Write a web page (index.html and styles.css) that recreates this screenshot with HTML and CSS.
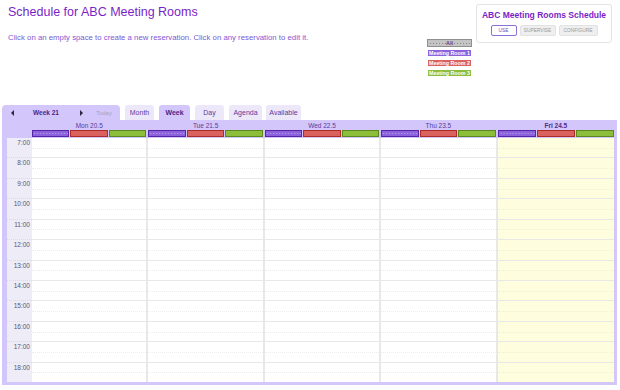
FILE: index.html
```html
<!DOCTYPE html>
<html lang="en">
  <head>
    <meta charset="utf-8">
    <title>Schedule for ABC Meeting Rooms</title>
    <link rel="stylesheet" href="styles.css">
  </head>
  <body>
    <!-- Cabecera -->
    <header class="top">
      <div class="intro">
        <h1>Schedule for ABC Meeting Rooms</h1>
        <p>Click on an empty space to create a new reservation. Click on any reservation to edit it.</p>
      </div>
      <ul class="legend">
        <li class="all">All</li>
        <li class="room1">Meeting Room 1</li>
        <li class="room2">Meeting Room 2</li>
        <li class="room3">Meeting Room 3</li>
      </ul>
      <div class="app-box">
        <h2>ABC Meeting Rooms Schedule</h2>
        <div class="modes">
          <button class="mode on">USE</button>
          <button class="mode wide">SUPERVISE</button>
          <button class="mode wider">CONFIGURE</button>
        </div>
      </div>
    </header>

    <!-- Calendario -->
    <section class="calendar">
      <nav class="tabs">
        <div class="week-nav">
          <span class="arrow left"></span>
          <b>Week 21</b>
          <span class="arrow right"></span>
          <span class="today">Today</span>
        </div>
        <a class="tab t-month">Month</a>
        <a class="tab t-week active">Week</a>
        <a class="tab t-day">Day</a>
        <a class="tab t-agenda">Agenda</a>
        <a class="tab t-avail">Available</a>
      </nav>

      <div class="frame">
        <div class="corner"></div>
        <div class="day-head">Mon 20.5<div class="bars"><i class="b1"></i><i class="b2"></i><i class="b3"></i></div></div>
        <div class="day-head">Tue 21.5<div class="bars"><i class="b1"></i><i class="b2"></i><i class="b3"></i></div></div>
        <div class="day-head">Wed 22.5<div class="bars"><i class="b1"></i><i class="b2"></i><i class="b3"></i></div></div>
        <div class="day-head">Thu 23.5<div class="bars"><i class="b1"></i><i class="b2"></i><i class="b3"></i></div></div>
        <div class="day-head current">Fri 24.5<div class="bars"><i class="b1"></i><i class="b2"></i><i class="b3"></i></div></div>

        <div class="times" id="times"></div>
        <div class="day"></div>
        <div class="day"></div>
        <div class="day"></div>
        <div class="day"></div>
        <div class="day current"></div>
      </div>
    </section>

    <script>
      // Horas de 7:00 a 18:00
      const times = document.getElementById('times');
      for (let h = 7; h <= 18; h++) {
        times.insertAdjacentHTML('beforeend', '<div class="time">' + h + ':00</div>');
      }
      document.querySelectorAll('.day').forEach(function(col) {
        for (let h = 7; h <= 18; h++) {
          col.insertAdjacentHTML('beforeend', '<div class="slot"></div>');
        }
      });
    </script>
  </body>
</html>
```

FILE: styles.css
```css
/* Reseteo */
* {
  margin: 0;
  padding: 0;
  box-sizing: border-box;
}

body {
  font-family: "Liberation Sans", Arial, sans-serif;
  background: #fff;
  width: 620px;
  height: 390px;
  overflow: hidden;
}

/* Cabecera */
.top {
  display: flex;
  height: 105px;
  padding: 0 8px;
}

.intro {
  flex: 1;
}

.intro h1 {
  margin-top: 5px;
  font-size: 12.5px;
  line-height: 14px;
  font-weight: normal;
  color: #7a1fc6;
}

.intro p {
  margin-top: 14px;
  font-size: 7.8px;
  line-height: 10px;
  color: #7d5ad3;
}

.legend {
  list-style: none;
  margin-top: 39px;
  width: 45px;
}

.legend li {
  height: 8px;
  margin-bottom: 2px;
  border: 1px solid;
  font-size: 5.3px;
  line-height: 6px;
  font-weight: bold;
  text-align: center;
  color: #fff;
  white-space: nowrap;
}

.legend .all {
  background: #c4c4c4 linear-gradient(90deg, #8a8a8a 1px, transparent 1px) repeat-x center / 3px 1px;
  border-color: #909090;
  color: #5a4a8a;
}

.room1, .bars .b1 {
  background-color: #8b62dc;
  border-color: #5526a8;
}

.room2, .bars .b2 {
  background-color: #d9625e;
  border-color: #ad2c2a;
}

.room3, .bars .b3 {
  background-color: #8cbe3c;
  border-color: #5a8a1c;
}

.app-box {
  width: 136px;
  height: 39px;
  margin: 4px 0 0 4px;
  padding-top: 5px;
  border: 1px solid #e4e4e4;
  border-radius: 3px;
  text-align: center;
}

.app-box h2 {
  font-size: 8.5px;
  line-height: 10px;
  color: #7a1fc6;
}

.modes {
  display: flex;
  justify-content: center;
  gap: 3px;
  margin-top: 5px;
}

.mode {
  width: 36px;
  height: 11px;
  font-family: inherit;
  font-size: 4.8px;
  color: #9a9a9a;
  background: #efefef;
  border: 1px solid #e2e2e2;
  border-radius: 2px;
}

.mode.on {
  width: 26px;
  color: #6a4fb8;
  background: #fff;
  border-color: #8b6fd6;
}

.mode.wider {
  width: 39px;
}

/* Calendario */
.calendar {
  margin: 0 3px 0 2px;
}

.tabs {
  display: flex;
  height: 15px;
}

.week-nav {
  display: flex;
  align-items: center;
  width: 118px;
  background: #d3c6fb;
  border-radius: 4px 4px 0 0;
}

.week-nav b {
  margin-left: 19px;
  font-size: 6.5px;
  color: #4b1f8a;
}

.arrow {
  width: 0;
  height: 0;
  border-top: 3px solid transparent;
  border-bottom: 3px solid transparent;
}

.arrow.left {
  margin-left: 9px;
  border-right: 3px solid #2c2540;
}

.arrow.right {
  margin-left: 21px;
  border-left: 3px solid #2c2540;
}

.today {
  margin-left: 13px;
  font-size: 6px;
  color: #a9a2bd;
}

.tab {
  margin-left: 5px;
  width: 29px;
  background: #ece8f9;
  border-radius: 3px 3px 0 0;
  font-size: 7px;
  line-height: 15px;
  text-align: center;
  color: #5b3aa0;
}

.tab.active {
  width: 31px;
  background: #d3c6fb;
  font-weight: bold;
  color: #4b1f8a;
}

.t-agenda {
  width: 33px;
}

.t-avail {
  width: 35px;
  margin-left: 4px;
}

.frame {
  display: grid;
  grid-template-columns: 25px repeat(5, 1fr);
  grid-template-rows: 18px 244px;
  padding: 0 3px 3px 5px;
  background: #d3c6fb;
}

.day-head {
  padding: 2px 2px 0 0;
  font-size: 6.5px;
  line-height: 8px;
  text-align: center;
  color: #5a3c98;
}

.day-head.current {
  padding-right: 0;
  font-weight: bold;
  color: #4b2d8a;
}

.bars {
  display: flex;
  gap: 1px;
  height: 7px;
}

.bars i {
  flex: 1;
  border: 1px solid;
}

.bars .b1 {
  background-image: linear-gradient(90deg, rgba(255, 255, 255, 0.45) 1px, transparent 1px);
  background-size: 3px 1px;
  background-repeat: repeat-x;
  background-position: center;
}

.times {
  display: flex;
  flex-direction: column;
  background: #eeecf7;
}

.time {
  flex: 1;
  padding: 1px 2px 0 0;
  border-top: 1px dotted #dcd7ec;
  font-size: 6.5px;
  line-height: 8px;
  text-align: right;
  color: #5c5470;
}

.time:first-child {
  border-top: none;
}

.day {
  display: flex;
  flex-direction: column;
  background: #fff;
  border-right: 2px solid #e8e8e8;
}

.day.current {
  background: #fefedf;
  border-right: none;
}

.slot {
  flex: 1;
  border-top: 1px solid #e8e8e8;
}

.slot:first-child {
  border-top: none;
}

.slot::before {
  content: "";
  display: block;
  height: 50%;
  border-bottom: 1px dotted #ececec;
}
```
